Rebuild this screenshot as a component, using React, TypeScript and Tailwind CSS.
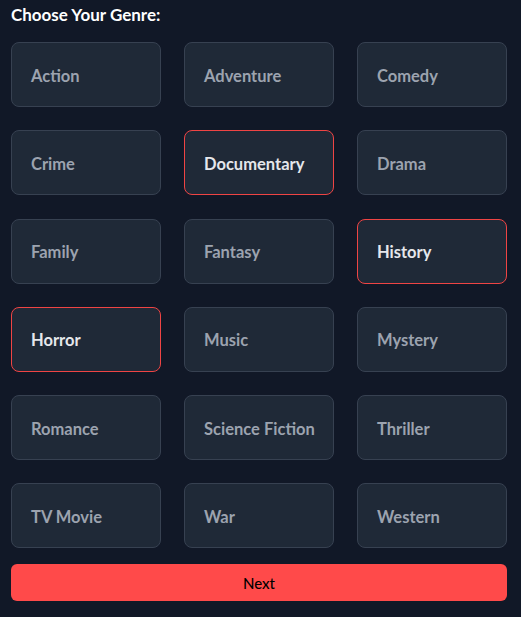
import { useState } from "react";

const GENRES = [
  "Action",
  "Adventure",
  "Comedy",
  "Crime",
  "Documentary",
  "Drama",
  "Family",
  "Fantasy",
  "History",
  "Horror",
  "Music",
  "Mystery",
  "Romance",
  "Science Fiction",
  "Thriller",
  "TV Movie",
  "War",
  "Western",
];

export default function App() {
  const [selected, setSelected] = useState<string[]>(["Documentary", "History", "Horror"]);

  const toggle = (g: string) =>
    setSelected((s) => (s.includes(g) ? s.filter((x) => x !== g) : [...s, g]));

  return (
    <main
      className="min-h-screen w-full bg-[#111827] px-[11px] pt-[4px]"
      style={{ fontFamily: "Lato, 'Noto Sans', sans-serif" }}
    >
      <h1 className="text-[17px] font-bold leading-[21px] text-white">Choose Your Genre:</h1>

      <div className="mt-[17px] grid w-[496px] grid-cols-3 gap-x-[23px] gap-y-[23.25px]">
        {GENRES.map((g) => {
          const on = selected.includes(g);
          return (
            <button
              key={g}
              onClick={() => toggle(g)}
              className={`flex h-[65px] items-center whitespace-nowrap rounded-lg border bg-[#1f2937] px-[19px] pt-[3px] text-left text-[16.5px] font-bold ${
                on ? "border-[#ef4444] text-[#e5e7eb]" : "border-[#374151] text-[#9ca3af]"
              }`}
            >
              {g}
            </button>
          );
        })}
      </div>

      <button className="mt-[16px] h-[37px] w-[496px] rounded-md bg-[#ff4a4a] text-[15px] font-medium text-black">
        Next
      </button>
    </main>
  );
}
